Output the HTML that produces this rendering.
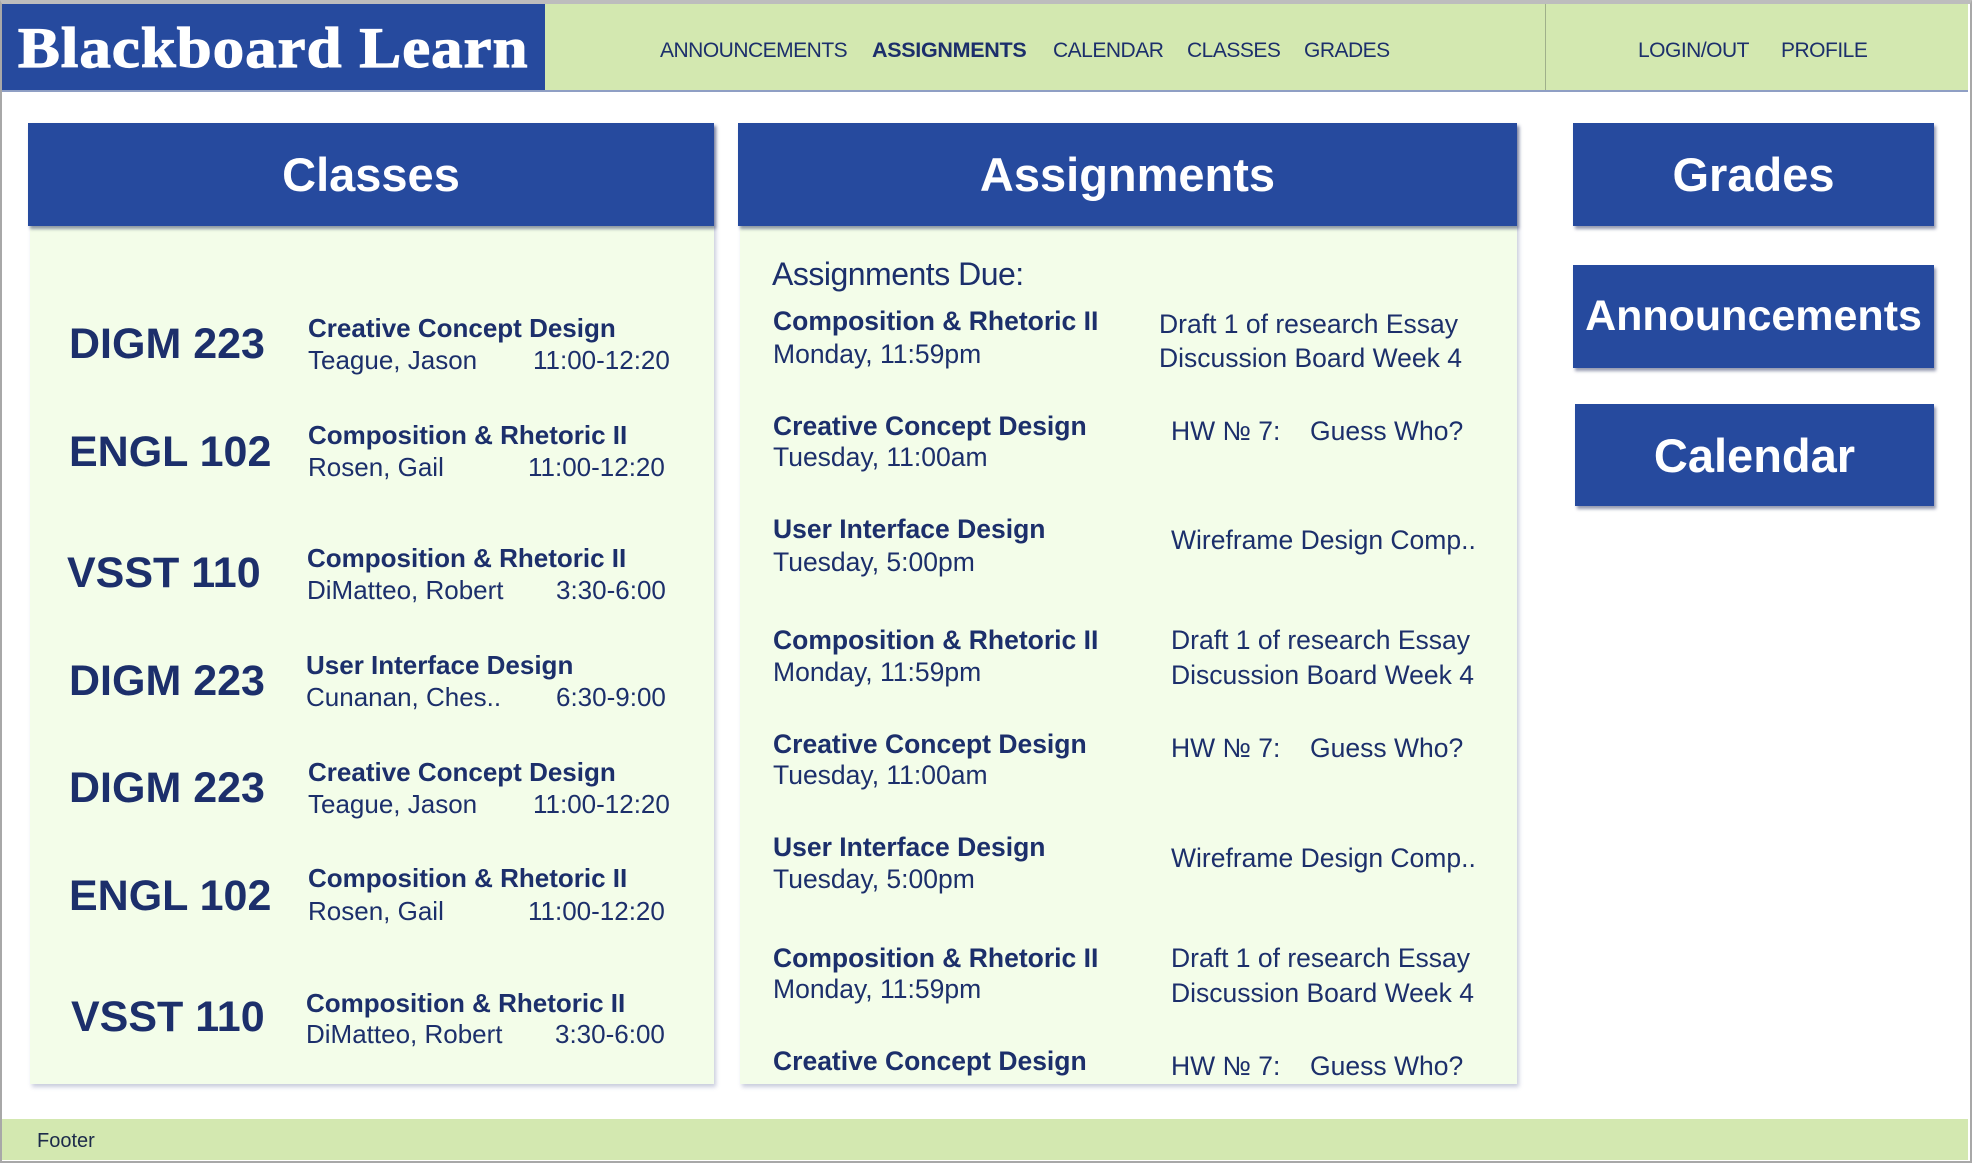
<!DOCTYPE html>
<html><head><meta charset="utf-8"><style>
body{margin:0;width:1972px;height:1163px;position:relative;background:#fff;font-family:"Liberation Sans",Arial,sans-serif;color:#1c2f6b;overflow:hidden}
.a{position:absolute;line-height:1;white-space:nowrap}
.frame{position:absolute;left:0;top:0;border:2px solid #a8a8a8;border-top:4px solid #bdbdbd;box-sizing:border-box;width:1972px;height:1163px}
.hdr{position:absolute;left:2px;top:4px;width:1966px;height:86px;background:#d3e8b0;border-bottom:2px solid #8f9fc4}
.logo{position:absolute;left:2px;top:4px;width:543px;height:86px;background:#264a9e}
.blue{position:absolute;background:#264a9e;color:#fff;font-weight:bold;display:flex;align-items:center;justify-content:center;box-shadow:2px 3px 3px rgba(20,30,80,.45)}
.panel{position:absolute;background:#f3fde9;box-shadow:2px 3px 4px rgba(120,130,170,.4)}
.b{font-weight:bold}
.c .a{font-size:26px}
.c .k{font-size:43px;font-weight:bold}
.s .a{font-size:26.5px}
</style></head><body>
<div class="frame"></div>
<div class="hdr"></div>
<div style="position:absolute;left:1545px;top:4px;width:1px;height:86px;background:#9fb08a"></div>
<div class="logo"></div>
<div class="a" style="left:18px;top:20px;font-family:'Liberation Serif',serif;font-weight:bold;font-size:57px;color:#fff;letter-spacing:1px;transform:scaleX(1.1);transform-origin:0 0;-webkit-text-stroke:1.2px #fff">Blackboard Learn</div>
<div class="a" style="top:40px;left:660px;font-size:21px;letter-spacing:-0.5px">ANNOUNCEMENTS</div>
<div class="a b" style="top:40px;left:872px;font-size:21.5px;letter-spacing:-0.3px">ASSIGNMENTS</div>
<div class="a" style="top:40px;left:1053px;font-size:21px;letter-spacing:-0.5px">CALENDAR</div>
<div class="a" style="top:40px;left:1187px;font-size:21px;letter-spacing:-0.5px">CLASSES</div>
<div class="a" style="top:40px;left:1304px;font-size:21px;letter-spacing:-0.5px">GRADES</div>
<div class="a" style="top:40px;left:1638px;font-size:21px;letter-spacing:-0.5px">LOGIN/OUT</div>
<div class="a" style="top:40px;left:1781px;font-size:21px;letter-spacing:-0.5px">PROFILE</div>

<div class="panel" style="left:30px;top:123px;width:684px;height:961px"></div>
<div class="panel" style="left:740px;top:123px;width:777px;height:961px"></div>
<div class="blue" style="left:28px;top:123px;width:686px;height:103px;font-size:47px">Classes</div>
<div class="blue" style="left:738px;top:123px;width:779px;height:103px;font-size:47px">Assignments</div>
<div class="blue" style="left:1573px;top:123px;width:361px;height:103px;font-size:47px">Grades</div>
<div class="blue" style="left:1573px;top:265px;width:361px;height:103px;font-size:43px">Announcements</div>
<div class="blue" style="left:1575px;top:404px;width:359px;height:102px;font-size:47px">Calendar</div>

<div class="c">
<div class="a k" style="left:69px;top:323px">DIGM 223</div>
<div class="a b" style="left:308px;top:315px">Creative Concept Design</div>
<div class="a" style="left:308px;top:347px">Teague, Jason</div>
<div class="a" style="left:533px;top:347px">11:00-12:20</div>

<div class="a k" style="left:69px;top:431px">ENGL 102</div>
<div class="a b" style="left:308px;top:422px">Composition &amp; Rhetoric II</div>
<div class="a" style="left:308px;top:454px">Rosen, Gail</div>
<div class="a" style="left:528px;top:454px">11:00-12:20</div>

<div class="a k" style="left:67px;top:552px">VSST 110</div>
<div class="a b" style="left:307px;top:545px">Composition &amp; Rhetoric II</div>
<div class="a" style="left:307px;top:577px">DiMatteo, Robert</div>
<div class="a" style="left:556px;top:577px">3:30-6:00</div>

<div class="a k" style="left:69px;top:660px">DIGM 223</div>
<div class="a b" style="left:306px;top:652px">User Interface Design</div>
<div class="a" style="left:306px;top:684px">Cunanan, Ches..</div>
<div class="a" style="left:556px;top:684px">6:30-9:00</div>

<div class="a k" style="left:69px;top:767px">DIGM 223</div>
<div class="a b" style="left:308px;top:759px">Creative Concept Design</div>
<div class="a" style="left:308px;top:791px">Teague, Jason</div>
<div class="a" style="left:533px;top:791px">11:00-12:20</div>

<div class="a k" style="left:69px;top:875px">ENGL 102</div>
<div class="a b" style="left:308px;top:865px">Composition &amp; Rhetoric II</div>
<div class="a" style="left:308px;top:898px">Rosen, Gail</div>
<div class="a" style="left:528px;top:898px">11:00-12:20</div>

<div class="a k" style="left:71px;top:996px">VSST 110</div>
<div class="a b" style="left:306px;top:990px">Composition &amp; Rhetoric II</div>
<div class="a" style="left:306px;top:1021px">DiMatteo, Robert</div>
<div class="a" style="left:555px;top:1021px">3:30-6:00</div>
</div>

<div class="a" style="left:772px;top:258px;font-size:32px;letter-spacing:-0.5px">Assignments Due:</div>
<div class="s">
<div class="a b" style="left:773px;top:308px">Composition &amp; Rhetoric II</div>
<div class="a" style="left:773px;top:341px">Monday, 11:59pm</div>
<div class="a" style="left:1159px;top:311px">Draft 1 of research Essay</div>
<div class="a" style="left:1159px;top:345px">Discussion Board Week 4</div>

<div class="a b" style="left:773px;top:413px">Creative Concept Design</div>
<div class="a" style="left:773px;top:444px">Tuesday, 11:00am</div>
<div class="a" style="left:1171px;top:418px">HW № 7:</div>
<div class="a" style="left:1310px;top:418px">Guess Who?</div>

<div class="a b" style="left:773px;top:516px">User Interface Design</div>
<div class="a" style="left:773px;top:549px">Tuesday, 5:00pm</div>
<div class="a" style="left:1171px;top:527px">Wireframe Design Comp..</div>

<div class="a b" style="left:773px;top:627px">Composition &amp; Rhetoric II</div>
<div class="a" style="left:773px;top:659px">Monday, 11:59pm</div>
<div class="a" style="left:1171px;top:627px">Draft 1 of research Essay</div>
<div class="a" style="left:1171px;top:662px">Discussion Board Week 4</div>

<div class="a b" style="left:773px;top:731px">Creative Concept Design</div>
<div class="a" style="left:773px;top:762px">Tuesday, 11:00am</div>
<div class="a" style="left:1171px;top:735px">HW № 7:</div>
<div class="a" style="left:1310px;top:735px">Guess Who?</div>

<div class="a b" style="left:773px;top:834px">User Interface Design</div>
<div class="a" style="left:773px;top:866px">Tuesday, 5:00pm</div>
<div class="a" style="left:1171px;top:845px">Wireframe Design Comp..</div>

<div class="a b" style="left:773px;top:945px">Composition &amp; Rhetoric II</div>
<div class="a" style="left:773px;top:976px">Monday, 11:59pm</div>
<div class="a" style="left:1171px;top:945px">Draft 1 of research Essay</div>
<div class="a" style="left:1171px;top:980px">Discussion Board Week 4</div>

<div class="a b" style="left:773px;top:1048px">Creative Concept Design</div>
<div class="a" style="left:1171px;top:1053px">HW № 7:</div>
<div class="a" style="left:1310px;top:1053px">Guess Who?</div>
</div>

<div style="position:absolute;left:2px;top:1119px;width:1966px;height:41px;background:#d3e8b0"></div>
<div class="a" style="left:37px;top:1131px;font-size:20px;color:#1c2a4a">Footer</div>
</body></html>
